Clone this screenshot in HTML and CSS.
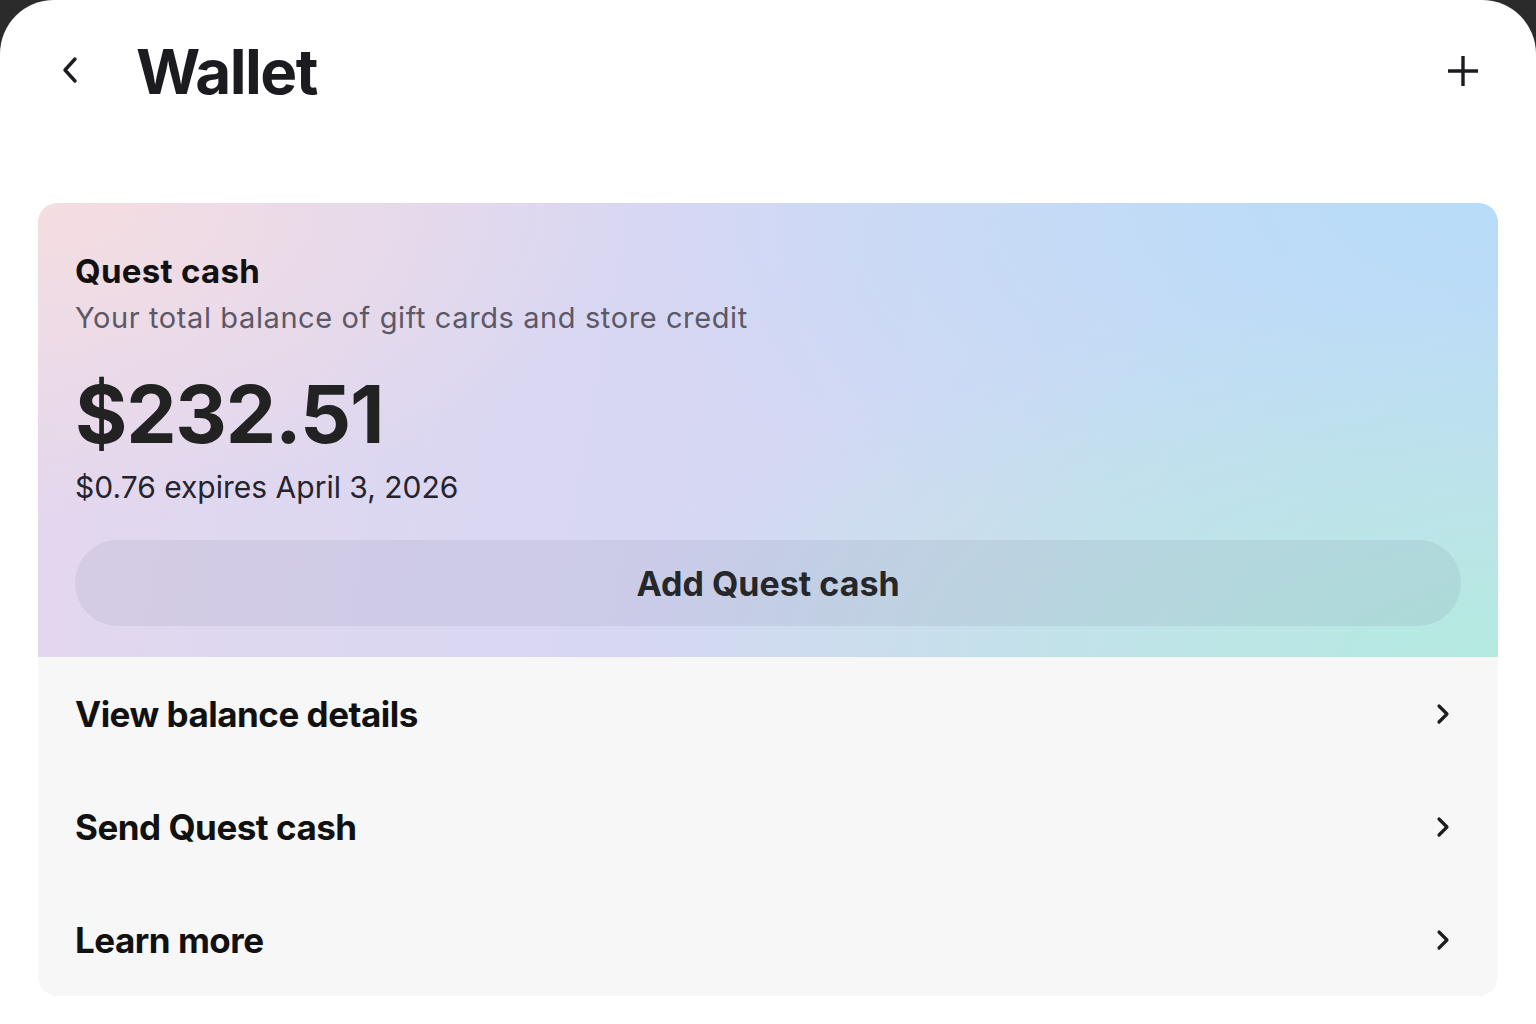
FILE: index.html
```html
<!DOCTYPE html>
<html lang="en">
<head>
    <meta charset="UTF-8">
    <meta name="viewport" content="width=device-width, initial-scale=1.0">
    <title>Wallet</title>
    <link rel="stylesheet" href="styles.css">
</head>
<body>
    <!-- White sheet with rounded top corners -->
    <main class="sheet">
        <!-- Top bar: back, title, add -->
        <header class="top_bar">
            <button class="icon_btn back" aria-label="Back">
                <svg width="20" height="28" viewBox="0 0 20 28"><path d="M15 3 L5 14 L15 25" fill="none" stroke="#1c1b1f" stroke-width="3.4" stroke-linecap="round" stroke-linejoin="round"/></svg>
            </button>
            <h1 class="title">Wallet</h1>
            <button class="icon_btn add" aria-label="Add">
                <svg width="34" height="34" viewBox="0 0 34 34"><path d="M17 2 V32 M2 17 H32" fill="none" stroke="#1c1b1f" stroke-width="3.4"/></svg>
            </button>
        </header>

        <!-- Balance card -->
        <section class="card">
            <div class="card_top">
                <h2 class="card_title">Quest cash</h2>
                <p class="card_sub">Your total balance of gift cards and store credit</p>
                <p class="amount">$232.51</p>
                <p class="expires">$0.76 expires April 3, 2026</p>
                <button class="add_cash">Add Quest cash</button>
            </div>
            <ul class="menu">
                <li class="menu_row"><span>View balance details</span><svg class="chev" width="14" height="22" viewBox="0 0 14 22"><path d="M3 3 L11 11 L3 19" fill="none" stroke="#1c1b1f" stroke-width="3.2" stroke-linecap="round" stroke-linejoin="round"/></svg></li>
                <li class="menu_row"><span>Send Quest cash</span><svg class="chev" width="14" height="22" viewBox="0 0 14 22"><path d="M3 3 L11 11 L3 19" fill="none" stroke="#1c1b1f" stroke-width="3.2" stroke-linecap="round" stroke-linejoin="round"/></svg></li>
                <li class="menu_row"><span>Learn more</span><svg class="chev" width="14" height="22" viewBox="0 0 14 22"><path d="M3 3 L11 11 L3 19" fill="none" stroke="#1c1b1f" stroke-width="3.2" stroke-linecap="round" stroke-linejoin="round"/></svg></li>
            </ul>
        </section>
    </main>
</body>
</html>
```

FILE: styles.css
```css
/* Dark backdrop behind the rounded sheet */
html, body {
    margin: 0;
    height: 100%;
    background-color: #2b2b2b;
}
body {
    font-family: Inter, "Noto Sans", sans-serif;
    color: #1c1b1f;
}
/* Main white sheet */
.sheet {
    background-color: #fff;
    min-height: 100%;
    border-radius: 54px 54px 0 0;
    padding: 0 38px 0 38px;
    box-sizing: border-box;
}
/* Header */
.top_bar {
    display: flex;
    align-items: center;
    height: 142px;
}
.icon_btn {
    background: none;
    border: none;
    padding: 0;
    display: flex;
    cursor: pointer;
}
.back {
    margin-left: 22px;
    margin-top: -2px;
}
.title {
    margin: 0 0 0 56px;
    font-size: 62px;
    font-weight: 700;
    letter-spacing: -1.5px;
    flex: 1;
}
.add {
    margin-right: 18px;
}
/* Card */
.card {
    margin-top: 61px;
    border-radius: 20px;
    overflow: hidden;
    background-color: #f7f7f7;
}
.card_top {
    padding: 46px 37px 31px 37px;
    background:
        radial-gradient(ellipse 40% 70% at 0% 0%, rgba(246, 222, 224, 0.95), rgba(246, 222, 224, 0) 100%),
        radial-gradient(ellipse 60% 80% at 100% 100%, rgba(180, 234, 224, 1), rgba(180, 234, 224, 0) 100%),
        radial-gradient(ellipse 60% 90% at 100% 0%, rgba(183, 220, 249, 1), rgba(183, 220, 249, 0) 100%),
        linear-gradient(100deg, #e4d7ee 0%, #d8d7f3 40%, #c9dcf3 100%);
}
.card_title {
    margin: 0;
    font-size: 33px;
    font-weight: 700;
    letter-spacing: 0.3px;
    line-height: 44px;
    color: #111;
}
.card_sub {
    margin: 7px 0 0 0;
    font-size: 29px;
    line-height: 36px;
    letter-spacing: 0.6px;
    color: #5c5866;
}
.amount {
    margin: 30px 0 0 0;
    font-size: 80px;
    font-weight: 700;
    line-height: 96px;
    letter-spacing: -1.2px;
    color: #222;
}
.expires {
    margin: 5px 0 0 0;
    font-size: 30px;
    line-height: 40px;
    color: #25232b;
}
.add_cash {
    display: block;
    width: 100%;
    height: 86px;
    margin-top: 33px;
    border: none;
    border-radius: 43px;
    background-color: rgba(70, 70, 100, 0.08);
    font-family: inherit;
    font-size: 34px;
    font-weight: 700;
    letter-spacing: 0;
    color: #26272b;
}
/* Menu rows */
.menu {
    list-style: none;
    margin: 0;
    padding: 0 0 0 37px;
}
.menu_row {
    display: flex;
    align-items: center;
    justify-content: space-between;
    height: 113px;
    padding-right: 48px;
    font-size: 35px;
    font-weight: 700;
    letter-spacing: -0.5px;
    color: #111;
}
```
